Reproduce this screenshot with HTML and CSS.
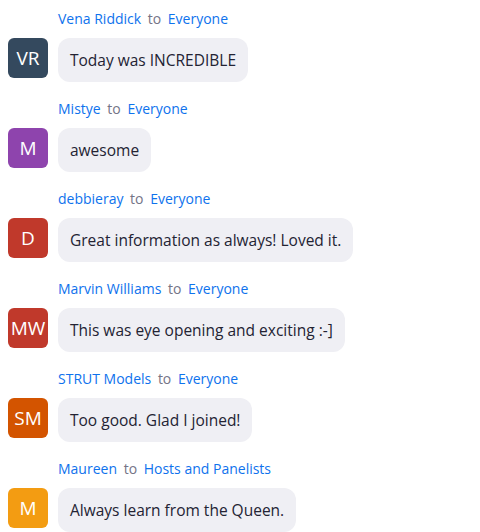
FILE: index.html
```html
<!DOCTYPE html>
<html lang="en">
<head>
    <meta charset="UTF-8">
    <meta name="viewport" content="width=device-width, initial-scale=1.0">
    <title>Chat</title>
    <link rel="stylesheet" href="styles.css">
</head>
<body>
    <div class="chat">
        <!-- Message -->
        <div class="message">
            <div class="sender"><span class="name">Vena Riddick</span> <span class="to">to</span> <span class="name">Everyone</span></div>
            <div class="row">
                <div class="avatar slate">VR</div>
                <div class="bubble">Today was INCREDIBLE</div>
            </div>
        </div>

        <div class="message">
            <div class="sender"><span class="name">Mistye</span> <span class="to">to</span> <span class="name">Everyone</span></div>
            <div class="row">
                <div class="avatar purple">M</div>
                <div class="bubble">awesome</div>
            </div>
        </div>

        <div class="message">
            <div class="sender"><span class="name">debbieray</span> <span class="to">to</span> <span class="name">Everyone</span></div>
            <div class="row">
                <div class="avatar red">D</div>
                <div class="bubble">Great information as always! Loved it.</div>
            </div>
        </div>

        <div class="message">
            <div class="sender"><span class="name">Marvin Williams</span> <span class="to">to</span> <span class="name">Everyone</span></div>
            <div class="row">
                <div class="avatar red">MW</div>
                <div class="bubble">This was eye opening and exciting :-]</div>
            </div>
        </div>

        <div class="message">
            <div class="sender"><span class="name">STRUT Models</span> <span class="to">to</span> <span class="name">Everyone</span></div>
            <div class="row">
                <div class="avatar orange">SM</div>
                <div class="bubble">Too good. Glad I joined!</div>
            </div>
        </div>

        <div class="message">
            <div class="sender"><span class="name">Maureen</span> <span class="to">to</span> <span class="name">Hosts and Panelists</span></div>
            <div class="row">
                <div class="avatar yellow">M</div>
                <div class="bubble">Always learn from the Queen.</div>
            </div>
        </div>
    </div>
</body>
</html>
```

FILE: styles.css
```css
* {
    margin: 0;
    padding: 0;
    box-sizing: border-box;
}

body {
    font-family: 'Open Sans', 'Noto Sans', sans-serif;
    background-color: #fff;
    color: #232333;
}

/* Chat list */
.chat {
    padding: 9px 8px 0 8px;
}

.message {
    margin-bottom: 17px;
}

.sender {
    padding-left: 50px;
    font-size: 14px;
    line-height: 20px;
    margin-bottom: 9px;
}

.sender .name {
    color: #0e72ed;
}

.sender .to {
    color: #747487;
    margin: 0 3px;
}

.row {
    display: flex;
    align-items: flex-start;
    gap: 10px;
}

/* Avatar */
.avatar {
    width: 40px;
    height: 40px;
    flex-shrink: 0;
    border-radius: 6px;
    color: #fff;
    font-size: 19px;
    display: flex;
    align-items: center;
    justify-content: center;
}

.slate { background-color: #34495e; }
.purple { background-color: #8e44ad; }
.red { background-color: #c0392b; }
.orange { background-color: #d35400; }
.yellow { background-color: #f39c12; }

/* Bubble */
.bubble {
    background-color: #efeff4;
    border-radius: 12px;
    padding: 0 12px;
    height: 44px;
    line-height: 44px;
    font-size: 15.5px;
}
```
